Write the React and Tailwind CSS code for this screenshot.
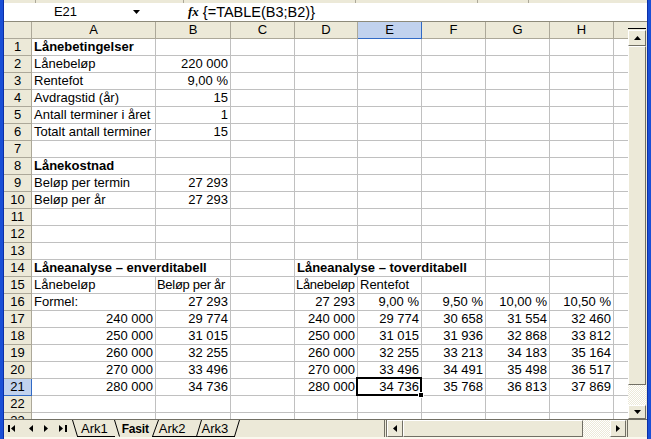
import React from "react"

const C = [
  { k: "A", w: "w-[124px]" },
  { k: "B", w: "w-[75px]" },
  { k: "C", w: "w-[64px]" },
  { k: "D", w: "w-[63px]" },
  { k: "E", w: "w-[64px]" },
  { k: "F", w: "w-[64px]" },
  { k: "G", w: "w-[64px]" },
  { k: "H", w: "w-[64px]" },
  { k: "I", w: "flex-1 min-w-0", last: true },
]

const L = (t) => ({ t })
const T = (t) => ({ t, tight: true })
const R = (t) => ({ t, r: true })
const Bo = (t) => ({ t, b: true })

const one = [
  [240, "29 774"],
  [250, "31 015"],
  [260, "32 255"],
  [270, "33 496"],
  [280, "34 736"],
]
const two = [
  ["29 774", "30 658", "31 554", "32 460"],
  ["31 015", "31 936", "32 868", "33 812"],
  ["32 255", "33 213", "34 183", "35 164"],
  ["33 496", "34 491", "35 498", "36 517"],
  ["34 736", "35 768", "36 813", "37 869"],
]

const data = {
  1: { A: Bo("Lånebetingelser") },
  2: { A: L("Lånebeløp"), B: R("220 000") },
  3: { A: L("Rentefot"), B: R("9,00 %") },
  4: { A: L("Avdragstid (år)"), B: R("15") },
  5: { A: L("Antall terminer i året"), B: R("1") },
  6: { A: L("Totalt antall terminer"), B: R("15") },
  8: { A: Bo("Lånekostnad") },
  9: { A: L("Beløp per termin"), B: R("27 293") },
  10: { A: L("Beløp per år"), B: R("27 293") },
  14: {
    A: { t: "Låneanalyse – enverditabell", b: true, span: 2, w: "w-[199px]" },
    D: { t: "Låneanalyse – toverditabell", b: true, span: 3, w: "w-[191px]" },
  },
  15: { A: L("Lånebeløp"), B: T("Beløp per år"), D: T("Lånebeløp"), E: L("Rentefot") },
  16: {
    A: L("Formel:"),
    B: R("27 293"),
    D: R("27 293"),
    E: R("9,00 %"),
    F: R("9,50 %"),
    G: R("10,00 %"),
    H: R("10,50 %"),
  },
}
one.forEach(([amt, v], i) => {
  const a = `${amt} 000`
  data[17 + i] = {
    A: R(a),
    B: R(v),
    D: R(a),
    E: R(two[i][0]),
    F: R(two[i][1]),
    G: R(two[i][2]),
    H: R(two[i][3]),
  }
})

function Tri({ dir }) {
  const pts = { up: "0,4 3.5,0 7,4", down: "0,0 7,0 3.5,4", left: "4,0 4,7 0,3.5", right: "0,0 0,7 4,3.5" }
  const v = dir === "up" || dir === "down"
  return (
    <svg width={v ? 7 : 4} height={v ? 4 : 7} viewBox={v ? "0 0 7 4" : "0 0 4 7"}>
      <polygon points={pts[dir]} fill="black" />
    </svg>
  )
}

const btn =
  "flex items-center justify-center bg-[#ece9d8] border border-t-white border-l-white border-r-[#716f64] border-b-[#716f64] shrink-0"
const checker = "bg-[repeating-conic-gradient(#ffffff_0_25%,#ece9d8_0_50%)] bg-[length:2px_2px]"

function Row({ n }) {
  const cells = data[n] || {}
  const sel = n === 21
  const out = []
  for (let i = 0; i < C.length; i++) {
    const col = C[i]
    const c = cells[col.k]
    const active = sel && col.k === "E"
    out.push(
      <div
        key={col.k}
        className={`${c?.w || col.w} shrink-0 h-full px-[2px] flex items-center whitespace-nowrap border-b border-[#c0c0c0] ${
          col.last ? "" : "border-r"
        } ${c?.r ? "justify-end" : ""} ${c?.b ? "font-bold" : ""} ${c?.tight ? "tracking-[-0.3px] px-px" : ""} ${
          active ? "relative" : ""
        }`}
      >
        {c?.t}
        {active && (
          <>
            <div className="absolute -left-[2px] -top-[2px] -right-[1px] -bottom-[1px] border-2 border-black pointer-events-none" />
            <div className="absolute -right-[3px] -bottom-[3px] w-[6px] h-[6px] bg-black border border-white" />
          </>
        )}
      </div>
    )
    if (c?.span) i += c.span - 1
  }
  return (
    <div className="flex h-[17px] shrink-0">
      <div
        className={`w-[28px] shrink-0 h-full flex items-center justify-center border-r border-b ${
          sel ? "bg-[#c1d2ee] border-[#316ac5]" : "bg-[#ece9d8] border-[#aca899]"
        }`}
      >
        {n}
      </div>
      {out}
    </div>
  )
}

export default function App() {
  const rows = Array.from({ length: 23 }, (_, i) => i + 1)
  return (
    <div className="w-[651px] h-[439px] flex bg-[#1a4fd6] overflow-hidden font-['Liberation_Sans',Arial,sans-serif] text-[13px] leading-[16px] text-black">
      <div className="w-[4px] shrink-0 border-r border-[#0b2fa8]" />
      <div className="flex-1 min-w-0 flex flex-col bg-[#ece9d8]">
        {/* toolbar remnant */}
        <div className="h-[3px] flex shrink-0">
          <div className="ml-[31px] w-px bg-[#aca899]" />
          <div className="ml-[147px] w-px bg-[#aca899]" />
          <div className="ml-[171px] w-px bg-[#aca899]" />
          <div className="ml-[121px] w-px bg-[#aca899]" />
          <div className="ml-[50px] w-px bg-[#aca899]" />
        </div>

        {/* formula bar */}
        <div className="h-[19px] shrink-0 bg-white border-b border-[#8d8a7a] flex items-center pl-[1px]">
          <div className="w-[121px] flex justify-center">E21</div>
          <div className="w-[20px] flex justify-center">
            <Tri dir="down" />
          </div>
          <div className="ml-[42px] italic font-bold font-['Liberation_Serif',serif] text-[13px]">fx</div>
          <div className="ml-[4px] text-[14.5px]">{"{=TABLE(B3;B2)}"}</div>
        </div>

        {/* sheet + vertical scrollbar */}
        <div className="h-[397px] shrink-0 flex">
          <div className="flex-1 min-w-0 flex flex-col overflow-hidden bg-white">
            <div className="flex h-[17px] shrink-0 bg-[#ece9d8]">
              <div className="w-[28px] shrink-0 h-full border-r border-b border-[#aca899]" />
              {C.map((col) => (
                <div
                  key={col.k}
                  className={`${col.w} shrink-0 h-full flex items-center justify-center border-b ${
                    col.last ? "" : "border-r"
                  } ${col.k === "E" ? "bg-[#c1d2ee] border-[#316ac5]" : "border-[#aca899]"}`}
                >
                  {col.last ? "" : col.k}
                </div>
              ))}
            </div>
            {rows.map((n) => (
              <Row key={n} n={n} />
            ))}
          </div>
          <div className="w-[19px] shrink-0 flex flex-col pr-[1px]">
            <div className="h-[6px] shrink-0" />
            <div className="h-px shrink-0 bg-black" />
            <div className="h-px shrink-0" />
            <div className={`${btn} h-[16px]`}>
              <Tri dir="up" />
            </div>
            <div className={`${btn} h-[339px]`} />
            <div className={`${checker} h-[20px] shrink-0`} />
            <div className={`${btn} h-[14px]`}>
              <Tri dir="down" />
            </div>
          </div>
        </div>

        {/* sheet tabs + horizontal scrollbar */}
        <div className="h-[18px] shrink-0 flex items-stretch border-t border-[#716f64]">
          <div className="flex items-center pl-[4px]">
            <svg width="8" height="7" viewBox="0 0 8 7">
              <rect x="0" y="0" width="2" height="7" fill="black" />
              <polygon points="7,0 7,7 3,3.5" fill="black" />
            </svg>
            <div className="ml-[13px] flex">
              <Tri dir="left" />
            </div>
            <div className="ml-[11px] flex">
              <Tri dir="right" />
            </div>
            <svg className="ml-[11px]" width="8" height="7" viewBox="0 0 8 7">
              <polygon points="0,0 0,7 4,3.5" fill="black" />
              <rect x="6" y="0" width="2" height="7" fill="black" />
            </svg>
          </div>
          <div className="relative ml-[2px] w-[172px] flex items-center">
            <svg className="absolute inset-0" width="172" height="17" viewBox="0 0 172 17">
              <g stroke="black" strokeWidth="1" fill="none">
                <line x1="3.5" y1="0" x2="8.5" y2="16.5" />
                <line x1="8" y1="16.5" x2="46" y2="16.5" />
                <line x1="45.5" y1="0" x2="50.5" y2="16.5" />
                <line x1="89.5" y1="0" x2="83.5" y2="16.5" />
                <line x1="83" y1="16.5" x2="166" y2="16.5" />
                <line x1="132.5" y1="0" x2="127.5" y2="16.5" />
                <line x1="170.5" y1="0" x2="165.5" y2="16.5" />
              </g>
            </svg>
            <span className="relative ml-[12px]">Ark1</span>
            <span className="relative ml-[14px] font-bold text-[12px] tracking-[-0.2px]">Fasit</span>
            <span className="relative ml-[10px]">Ark2</span>
            <span className="relative ml-[16px]">Ark3</span>
          </div>
          <div className="flex-1" />
          <div className="w-[244px] shrink-0 flex items-stretch">
            <div className="w-[3px] shrink-0 border-l border-r border-[#716f64]" />
            <div className={`${btn} w-[16px]`}>
              <Tri dir="left" />
            </div>
            <div className={`${btn} w-[180px]`} />
            <div className={`${checker} flex-1`} />
            <div className={`${btn} w-[16px]`}>
              <Tri dir="right" />
            </div>
            <div className="w-[2px] shrink-0 border-r border-[#716f64]" />
          </div>
          <div className="w-[19px] shrink-0" />
        </div>
        <div className="flex-1 bg-[#fbf8ee]" />
      </div>
      <div className="w-[4px] shrink-0 border-l border-[#0b2fa8]" />
    </div>
  )
}
